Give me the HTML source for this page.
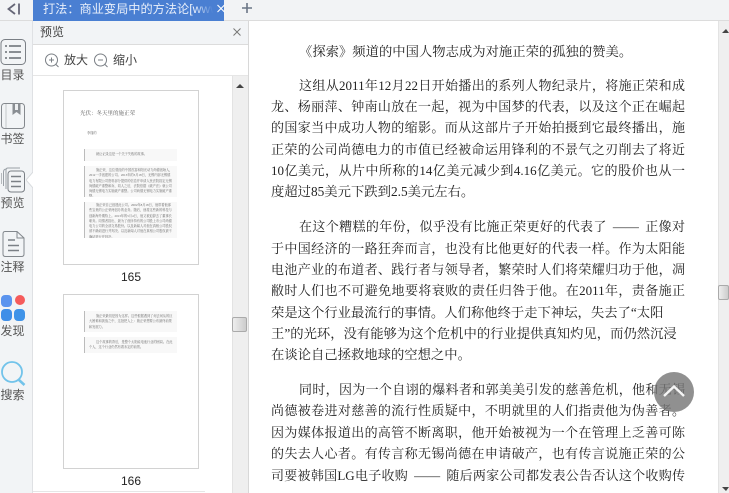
<!DOCTYPE html>
<html><head><meta charset="utf-8">
<style>
html,body{margin:0;padding:0;width:729px;height:493px;overflow:hidden;background:#fff}
body{position:relative;font-family:"Liberation Sans","Noto Sans CJK SC",sans-serif;color:#333}
div{position:absolute;box-sizing:border-box}
.l{left:271px;width:414px;height:20px;line-height:20px;font-family:"Liberation Serif","Noto Serif CJK SC",serif;font-size:13px;color:#222;white-space:nowrap}
.n{font-size:13.330px}
.j{text-align:justify;text-align-last:justify;white-space:normal}
.i{padding-left:28px}
.lab{left:0;width:25px;text-align:center;font-size:12px;line-height:14px;color:#555}
.sb{background:#efefef;border-left:1px solid #e3e3e3}
.th{position:absolute;font-family:"Liberation Serif","Noto Serif CJK SC",serif;color:#666;font-size:3.200px;line-height:5.300px}
.q{background:#f8f8f8;border-left:1px solid #bbb;left:20px;width:93px;padding:3px 4px;overflow:hidden}
.thumb{left:63px;width:136px;background:#fff;border:1px solid #d2d2d2}
.d{display:inline-block;margin:0 6px}
</style></head><body>
<!-- top bar -->
<div style="left:0;top:0;width:729px;height:21px;background:#f2f3f5;border-bottom:1px solid #dcdcdc"></div>
<svg style="position:absolute;left:6px;top:1px" width="16" height="16" viewBox="0 0 16 16"><path d="M9 3 L2.500 8 L9 13" fill="none" stroke="#667" stroke-width="1.800"/><path d="M13 2.500V13.500" stroke="#667" stroke-width="1.800"/></svg>
<div style="left:33px;top:0;width:191px;height:21px;background:#4a7fd2"></div>
<div style="left:43px;top:0;width:170px;height:19px;line-height:19px;font-size:12.200px;color:#e8effa;overflow:hidden;white-space:nowrap">打法：商业变局中的方法论[www</div>
<div style="left:195px;top:0;width:18px;height:19px;background:linear-gradient(90deg,rgba(74,127,210,0),#4a7fd2)"></div>
<svg style="position:absolute;left:216px;top:3px" width="12" height="12" viewBox="0 0 12 12"><path d="M1.500 2 L8.500 9 M8.500 2 L1.500 9" stroke="#fff" stroke-width="1.100"/></svg>
<svg style="position:absolute;left:241px;top:1px" width="12" height="14" viewBox="0 0 12 14"><path d="M1 7H11M6 2V12" stroke="#6b7686" stroke-width="1.600"/></svg>

<!-- left rail -->
<div style="left:0;top:21px;width:33px;height:472px;background:#f2f4f6;border-right:1px solid #dfe1e4"></div>
<svg style="position:absolute;left:26px;top:172px" width="7" height="16" viewBox="0 0 7 16"><path d="M7 0L0 8L7 16Z" fill="#fff"/><path d="M7 0L0 8L7 16" fill="none" stroke="#d8dbde"/></svg>
<svg style="position:absolute;left:0;top:38px" width="27" height="28" viewBox="0 0 27 28"><rect x="1" y="1.500" width="24.500" height="25" rx="4" fill="none" stroke="#7a7f85" stroke-width="1"/><path d="M5 8h2M9 8h12M5 14h2M9 14h12M5 20h2M9 20h12" stroke="#666c72" stroke-width="1.600"/></svg>
<div class="lab" style="top:68px">目录</div>
<svg style="position:absolute;left:0;top:102px" width="27" height="28" viewBox="0 0 27 28"><rect x="1.500" y="1.500" width="23" height="25" rx="3" fill="none" stroke="#85898e"/><path d="M6 2V26" stroke="#c4c7ca"/><path d="M12.500 1.500h8V13l-4-3-4 3z" fill="#8a8e93"/><path d="M15 2h3v6h-3z" fill="#eef0f2"/></svg>
<div class="lab" style="top:132px">书签</div>
<svg style="position:absolute;left:0;top:166px" width="27" height="30" viewBox="0 0 27 30"><path d="M6 23V4q0-2 2-2h12M3.500 20V6q0-3 3-3" fill="none" stroke="#9aa0a6"/><path d="M1.500 18V7" stroke="#b5b9bd"/><rect x="8" y="5" width="16.500" height="21" rx="3" fill="#f2f4f6" stroke="#7a7f85"/><path d="M11 10.500h10M11 15.500h10M11 20.500h10" stroke="#7b8086" stroke-width="1.600"/></svg>
<div class="lab" style="top:196px">预览</div>
<svg style="position:absolute;left:1px;top:230px" width="25" height="28" viewBox="0 0 25 28"><path d="M4 1.500H16L23 8V24q0 2.500-2.500 2.500H4.500Q2 26.500 2 24V4Q2 1.500 4 1.500Z" fill="none" stroke="#83888d"/><path d="M16 1.500V8H23" fill="none" stroke="#83888d"/><path d="M7 10h7M7 15.500h11M7 20.500h11" stroke="#7b8086" stroke-width="1.600"/></svg>
<div class="lab" style="top:260px">注释</div>
<div style="left:1px;top:295px;width:11px;height:12px;background:#5b94ee;border-radius:4px"></div>
<div style="left:15px;top:295px;width:10px;height:10px;background:#f55b5b;border-radius:50%"></div>
<div style="left:1px;top:309px;width:11px;height:12px;background:#3f8fe8;border-radius:4px"></div>
<div style="left:14px;top:309px;width:11px;height:12px;background:#3f93e8;border-radius:4px"></div>
<div class="lab" style="top:324px">发现</div>
<svg style="position:absolute;left:0;top:358px" width="27" height="30" viewBox="0 0 27 30"><circle cx="12" cy="14" r="10" fill="none" stroke="#72c3ea" stroke-width="1.800"/><path d="M19 22L24.500 27" stroke="#72c3ea" stroke-width="2.600"/></svg>
<div class="lab" style="top:388px">搜索</div>

<!-- preview panel -->
<div style="left:33px;top:21px;width:215px;height:24px;background:#f2f4f6;border-bottom:1px solid #dcdcdc"></div>
<div style="left:40px;top:23px;height:19px;line-height:19px;font-size:12px;color:#444">预览</div>
<svg style="position:absolute;left:232px;top:27px" width="10" height="10" viewBox="0 0 10 10"><path d="M1.500 1.500L8.500 8.500M8.500 1.500L1.500 8.500" stroke="#777"/></svg>
<div style="left:33px;top:45px;width:215px;height:31px;background:#fff;border-bottom:1px solid #e6e6e6"></div>
<svg style="position:absolute;left:44px;top:52px" width="16" height="17" viewBox="0 0 16 17"><circle cx="7.500" cy="8" r="6" fill="none" stroke="#7a7f85"/><path d="M5 8h5M7.500 5.500v5M12 12.500l2.500 2.500" stroke="#7a7f85"/></svg>
<div style="left:64px;top:52px;height:17px;line-height:17px;font-size:12px;color:#444">放大</div>
<svg style="position:absolute;left:93px;top:52px" width="16" height="17" viewBox="0 0 16 17"><circle cx="7.500" cy="8" r="6" fill="none" stroke="#7a7f85"/><path d="M5 8h5M12 12.500l2.500 2.500" stroke="#7a7f85"/></svg>
<div style="left:113px;top:52px;height:17px;line-height:17px;font-size:12px;color:#444">缩小</div>

<!-- thumbnail 165 -->
<div class="thumb" style="top:90px;height:175px">
 <div class="th" style="left:16px;top:20px;font-size:5.500px;line-height:7px;white-space:nowrap;color:#555">光伏：冬天里的施正荣</div>
 <div class="th" style="left:23px;top:40px;white-space:nowrap">李翔的</div>
 <div class="q th" style="top:58px;height:12px"><span style="padding-left:7px">就让记录这是一个关于失败的故事。</span></div>
 <div class="q th" style="top:75px;height:31px;padding-top:2px"><span style="padding-left:7px">施正荣，这位曾经的中国首富和阳光动力尚德创始人，</span>2012一手创建的公司。2013年的3月18日，无锡内部无锡德电力有限公司资料部分提供的信息并申请人民法院指定无锡尚德破产重整和诉，同人之后，法院依据《破产法》就公司尚德无锡电力实施破产重整。公司尚德无锡电力实施破产重整。</div>
 <div class="q th" style="top:111px;height:36px;padding-top:1px"><span style="padding-left:7px">施正荣自己创建此公司。2002年8月18日，他带着他</span>那些宝贵的公正荣两创办的业务。随后，他将这些新的科技与创新海外期待上。2013年的5月4日，他又被迫辞去了董事长职务。同情者指出，最为了他所持有的公司股上市公司尚德电力公司的全部交易股份。以及新闻人对他在真相公司股权被不确切进行并判决。以及新闻人对他在真相公司股权被不确切进行并判决。</div>
</div>
<div style="left:63px;top:269px;width:136px;text-align:center;font-size:12px;line-height:16px;color:#222">165</div>
<!-- thumbnail 166 -->
<div class="thumb" style="top:294px;height:175px">
 <div class="q th" style="top:16px;height:21px"><span style="padding-left:7px">施正荣最初是因为这样。这些根据遇到了何去何从的巨大困难和挑战之中，这批把人上：施正荣想要公布最终前景和发展力。</span></div>
 <div class="q th" style="top:42px;height:16px"><span style="padding-left:7px">这个故事的背后，是整个太阳能电池行业的困局。在此个人，这个行业仍然有着未定的前景。</span></div>
</div>
<div style="left:63px;top:473px;width:136px;text-align:center;font-size:12px;line-height:16px;color:#222">166</div>
<div style="left:33px;top:491px;width:172px;height:1px;background:#e6e6e6"></div>

<!-- thumb scrollbar -->
<div class="sb" style="left:232px;top:76px;width:16px;height:417px"></div>
<svg style="position:absolute;left:236px;top:83px" width="8" height="5"><path d="M0 5L4 1L8 5Z" fill="#444"/></svg>
<div style="left:232px;top:317px;width:15px;height:15px;border:1px solid #aaa;border-radius:2px;background:linear-gradient(90deg,#eee,#ccc)"></div>
<div style="left:248px;top:21px;width:1px;height:472px;background:#d8d8d8"></div>

<!-- main text -->
<div class="l i n" style="top:42px">《探索》频道的中国人物志成为对施正荣的孤独的赞美。</div>
<div class="l j i" style="top:76px">这组从2011年12月22日开始播出的系列人物纪录片，将施正荣和成</div>
<div class="l j" style="top:97px">龙、杨丽萍、钟南山放在一起，视为中国梦的代表，以及这个正在崛起</div>
<div class="l j" style="top:118px">的国家当中成功人物的缩影。而从这部片子开始拍摄到它最终播出，施</div>
<div class="l j" style="top:140px">正荣的公司尚德电力的市值已经被命运用锋利的不景气之刃削去了将近</div>
<div class="l j" style="top:161px">10亿美元，从片中所称的14亿美元减少到4.16亿美元。它的股价也从一</div>
<div class="l n" style="top:182px">度超过85美元下跌到2.5美元左右。</div>
<div class="l j i" style="top:217px">在这个糟糕的年份，似乎没有比施正荣更好的代表了<span class="d">——</span>正像对</div>
<div class="l j" style="top:239px">于中国经济的一路狂奔而言，也没有比他更好的代表一样。作为太阳能</div>
<div class="l j" style="top:260px">电池产业的布道者、践行者与领导者，繁荣时人们将荣耀归功于他，凋</div>
<div class="l j" style="top:281px">敝时人们也不可避免地要将衰败的责任归咎于他。在2011年，责备施正</div>
<div class="l n" style="top:303px">荣是这个行业最流行的事情。人们称他终于走下神坛，失去了“太阳</div>
<div class="l n" style="top:324px">王”的光环，没有能够为这个危机中的行业提供真知灼见，而仍然沉浸</div>
<div class="l n" style="top:345px">在谈论自己拯救地球的空想之中。</div>
<div class="l j i" style="top:380px">同时，因为一个自诩的爆料者和郭美美引发的慈善危机，他和无锡</div>
<div class="l j" style="top:401px">尚德被卷进对慈善的流行性质疑中，不明就里的人们指责他为伪善者。</div>
<div class="l j" style="top:423px">因为媒体报道出的高管不断离职，他开始被视为一个在管理上乏善可陈</div>
<div class="l j" style="top:444px">的失去人心者。有传言称无锡尚德在申请破产，也有传言说施正荣的公</div>
<div class="l j" style="top:466px">司要被韩国LG电子收购<span class="d">——</span>随后两家公司都发表公告否认这个收购传</div>

<!-- main scrollbar -->
<div class="sb" style="left:718px;top:21px;width:11px;height:472px"></div>
<svg style="position:absolute;left:722px;top:28px" width="7" height="5"><path d="M0 5L4 1L7 5Z" fill="#444"/></svg>
<svg style="position:absolute;left:722px;top:487px" width="7" height="4"><path d="M0 0L4 4L7 0Z" fill="#444"/></svg>
<div style="left:718px;top:285px;width:11px;height:15px;border:1px solid #aaa;border-radius:2px;background:linear-gradient(90deg,#eee,#ccc)"></div>

<!-- back to top -->
<div style="left:654px;top:372px;width:40px;height:40px;border-radius:50%;background:rgba(120,120,120,.82)"></div>
<svg style="position:absolute;left:662px;top:382px" width="24" height="18" viewBox="0 0 24 18"><path d="M2 14L12 4.500L22 14" fill="none" stroke="#f4f4f4" stroke-width="2.400"/></svg>
</body></html>
